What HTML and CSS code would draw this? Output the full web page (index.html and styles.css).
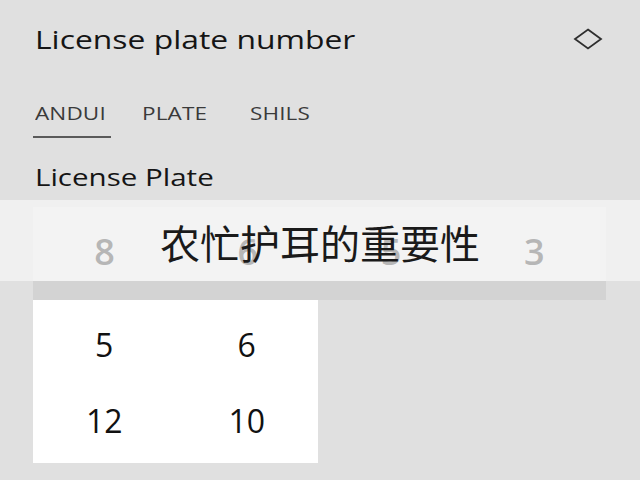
FILE: index.html
```html
<!DOCTYPE html>
<html lang="en">
<head>
<meta charset="utf-8">
<title>License plate number</title>
<link rel="stylesheet" href="styles.css">
</head>
<body>
<main class="screen">
  <header class="top-bar">
    <h1 class="title"><span class="wide">License plate number</span></h1>
    <svg class="diamond" width="30" height="22" viewBox="0 0 30 22" aria-hidden="true">
      <path d="M15 1.5 L28 11 L15 20.5 L2 11 Z" fill="none" stroke="#2e2e2e" stroke-width="1.8" stroke-linejoin="miter"/>
    </svg>
  </header>

  <nav class="tabs">
    <span class="tab tab-active"><span class="wide">ANDUI</span></span>
    <span class="tab"><span class="wide">PLATE</span></span>
    <span class="tab"><span class="wide">SHILS</span></span>
  </nav>

  <h2 class="section-title"><span class="wide">License Plate</span></h2>

  <div class="plate">
    <div class="plate-digits">
      <span class="plate-digit">8</span>
      <span class="plate-digit">6</span>
      <span class="plate-digit">5</span>
      <span class="plate-digit">3</span>
    </div>
    <div class="plate-strip"></div>
  </div>

  <div class="keypad">
    <span class="key">5</span>
    <span class="key">6</span>
    <span class="key">12</span>
    <span class="key">10</span>
  </div>

  <div class="caption">农忙护耳的重要性</div>
</main>
</body>
</html>
```

FILE: styles.css
```css
html, body {
  margin: 0;
  padding: 0;
}

body {
  background: #e0e0e0;
  font-family: "Open Sans", "Noto Sans", sans-serif;
  color: #1c1c1c;
  width: 640px;
  height: 480px;
  overflow: hidden;
}

.screen {
  position: relative;
  padding: 0 34px 0 33px;
  height: 480px;
  box-sizing: border-box;
}

/* the UI face is drawn a little wider than the stock font */
.wide {
  display: inline-block;
  transform-origin: left center;
  white-space: nowrap;
}

.top-bar {
  display: flex;
  align-items: center;
  justify-content: space-between;
  height: 78px;
  padding-left: 2px;
  padding-right: 3px;
}

.title {
  margin: 0;
  font-size: 26px;
  font-weight: 400;
  color: #151515;
}

.title .wide {
  transform: scaleX(1.225);
}

.diamond {
  display: block;
}

.tabs {
  display: grid;
  grid-template-columns: 107px 108px auto;
  padding-left: 2px;
  height: 60px;
  align-items: start;
  padding-top: 22px;
  box-sizing: border-box;
}

.tab {
  position: relative;
  font-size: 18px;
  color: #3a3a3a;
  line-height: 26px;
}

.tab .wide {
  transform: scaleX(1.25);
  letter-spacing: 0.1px;
}

.tab-active::after {
  content: "";
  position: absolute;
  left: -2px;
  width: 78px;
  top: 36px;
  height: 2px;
  background: #5a5a5a;
}

.section-title {
  margin: 0;
  padding-left: 2px;
  font-size: 24px;
  font-weight: 400;
  color: #151515;
  line-height: 40px;
  height: 69px;
  box-sizing: border-box;
  padding-top: 19px;
}

.section-title .wide {
  transform: scaleX(1.23);
}

.plate {
  background: #d3d3d3;
  padding-bottom: 19px;
}

.plate-digits {
  display: grid;
  grid-template-columns: repeat(4, 1fr);
  height: 74px;
  background: #e6e6e6;
}

.plate-digit {
  display: flex;
  align-items: center;
  justify-content: center;
  padding-top: 15px;
  font-size: 36px;
  font-weight: 600;
  color: #6c6c6c;
}

.keypad {
  display: grid;
  grid-template-columns: repeat(2, 1fr);
  grid-auto-rows: 76px;
  width: 285px;
  background: #ffffff;
  padding: 6px 0 5px;
}

.key {
  display: flex;
  align-items: center;
  justify-content: center;
  font-size: 32px;
  font-weight: 500;
  color: #111;
}

.caption {
  position: absolute;
  left: 0;
  right: 0;
  top: 200px;
  height: 81px;
  background: rgba(255, 255, 255, 0.5);
  display: flex;
  align-items: center;
  justify-content: center;
  padding-top: 3px;
  box-sizing: border-box;
  font-family: "Noto Sans CJK SC", sans-serif;
  font-size: 40px;
  font-weight: 400;
  color: #1a1a1a;
}
```
